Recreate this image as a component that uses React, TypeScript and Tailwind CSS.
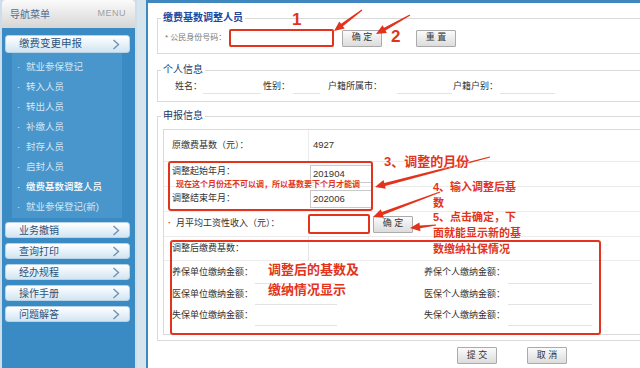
import React from 'react';

const subItems = ['就业参保登记', '转入人员', '转出人员', '补缴人员', '封存人员', '启封人员', '缴费基数调整人员', '就业参保登记(新)'];
const menus = ['业务撤销', '查询打印', '经办规程', '操作手册', '问题解答'];

const Chevron = () => (
  <svg width="8" height="11" viewBox="0 0 8 11" fill="none">
    <polyline points="1.5,1 6.5,5.5 1.5,10" stroke="#6f93b5" strokeWidth="1.4" />
  </svg>
);

const MenuButton = ({ label, tall }: { label: string; tall?: boolean }) => (
  <div
    className={`ml-[3px] mr-[5px] flex items-center justify-between rounded-[3px] border border-[#b7d3e8] bg-linear-to-b from-white to-[#d2e5f2] pl-[13px] pr-[9px] text-[#2e5279] ${
      tall ? 'h-[18px] text-[10.5px]' : 'h-[16px] text-[10px]'
    }`}
  >
    <span>{label}</span>
    <Chevron />
  </div>
);

const Btn = ({ label, className = '' }: { label: string; className?: string }) => (
  <div
    className={`flex h-[17px] w-[40px] items-center justify-center rounded-[1px] border border-[#ababab] bg-linear-to-b from-[#fbfbfb] to-[#dcdcdc] text-[9px] text-[#333] ${className}`}
  >
    {label}
  </div>
);

function arrow(x1: number, y1: number, x2: number, y2: number, w = 3, hw = 9, hl = 10) {
  const dx = x2 - x1;
  const dy = y2 - y1;
  const len = Math.hypot(dx, dy);
  const ux = dx / len;
  const uy = dy / len;
  const px = -uy;
  const py = ux;
  const bx = x2 - ux * hl;
  const by = y2 - uy * hl;
  const p = (x: number, y: number) => `${x.toFixed(1)},${y.toFixed(1)}`;
  return [
    p(x1 + px * 0.6, y1 + py * 0.6),
    p(bx + (px * w) / 2, by + (py * w) / 2),
    p(bx + (px * hw) / 2, by + (py * hw) / 2),
    p(x2, y2),
    p(bx - (px * hw) / 2, by - (py * hw) / 2),
    p(bx - (px * w) / 2, by - (py * w) / 2),
    p(x1 - px * 0.6, y1 - py * 0.6),
  ].join(' ');
}

const arrows = [
  [362, 10, 334, 31],
  [410, 15, 376, 34],
  [490, 157, 375, 187],
  [440, 192, 373, 217],
  [436, 225, 410, 228],
];

const halo = '[text-shadow:0_0_2px_#fff,0_0_2px_#fff,0_0_1px_#fff]';

export default function App() {
  return (
    <div className="relative flex h-[368px] w-[640px] overflow-hidden bg-[#d6e4ee] font-['Liberation_Sans','Noto_Sans_CJK_SC',sans-serif]">
      {/* sidebar */}
      <aside className="flex w-[137px] shrink-0 flex-col bg-[#cddde9] px-[2px]">
        <div className="flex h-[28px] items-center justify-between rounded-t-[4px] bg-linear-to-b from-[#fbfbfb] to-[#d6d6d6] pl-[8px] pr-[9px]">
          <span className="text-[10px] text-[#4d7198]">导航菜单</span>
          <span className="text-[9px] tracking-[0.5px] text-[#a0a0a0]">MENU</span>
        </div>
        <div className="flex-1 bg-[#3a8bc3] pt-[7px]">
          <MenuButton label="缴费变更申报" tall />
          <div className="ml-[10px] mr-[13px] bg-[#4896cb] pb-[1px] pt-[4px]">
            {subItems.map((s, i) => (
              <div
                key={s}
                className={`flex h-[20px] items-center pl-[5px] text-[9.5px] ${
                  i === 6 ? 'font-medium text-white' : 'text-[#d3e7f5]'
                }`}
              >
                <span className="w-[9px]">·</span>
                {s}
              </div>
            ))}
          </div>
          <div className="mt-[4px] flex flex-col gap-[5px]">
            {menus.map((m) => (
              <MenuButton key={m} label={m} />
            ))}
          </div>
        </div>
      </aside>

      {/* main */}
      <main className="ml-[9px] flex-1 overflow-hidden border-l-2 border-t-[3px] border-[#3f88bf] bg-white pl-[9px] text-[#333]">
        <fieldset className="mt-[7px] w-[520px] border border-[#dadada]">
          <legend className="ml-[3px] px-[2px] text-[10px] font-bold leading-[16px] text-[#2048a0]">缴费基数调整人员</legend>
          <div className="pb-[6px] pl-[7px] pt-[3px]">
            <div className="flex h-[18px] items-center">
              <span className="w-[64px] text-[8px] text-[#777]">* 公民身份号码：</span>
              <div className="h-[18px] w-[105px] rounded-[2px] border-2 border-[#e2341d] bg-white" />
              <Btn label="确 定" className="ml-[8px]" />
              <Btn label="重 置" className="ml-[34px]" />
            </div>
          </div>
        </fieldset>

        <fieldset className="mt-[8px] w-[520px] border border-[#dadada]">
          <legend className="ml-[3px] px-[2px] text-[10px] leading-[16px] text-[#253766]">个人信息</legend>
          <div className="pb-[6px] pl-[17px] pt-[1px]">
            <div className="flex h-[16px] items-center text-[9px]">
              <span className="w-[28px]">姓名：</span>
              <span className="h-[14px] w-[58px] border-b border-[#e3e3e3]" />
              <span className="ml-[2px] w-[30px]">性别：</span>
              <span className="h-[14px] w-[27px] border-b border-[#e3e3e3]" />
              <span className="ml-[8px] w-[69px]">户籍所属市：</span>
              <span className="h-[14px] w-[55px] border-b border-[#e3e3e3]" />
              <span className="ml-[1px] w-[47px]">户籍户别：</span>
              <span className="h-[14px] w-[55px] border-b border-[#e3e3e3]" />
            </div>
          </div>
        </fieldset>

        <fieldset className="mt-[6px] w-[520px] border border-[#dadada]">
          <legend className="ml-[3px] px-[2px] text-[10px] leading-[16px] text-[#253766]">申报信息</legend>
          <div className="pb-[5px] pl-[5px] pt-[5px]">
            <div className="border border-[#dadada] pb-[8px] text-[9px]">
              <div className="flex h-[32px] items-center border-b border-[#ececec]">
                <span className="w-[144px] pl-[8px]">原缴费基数（元）：</span>
                <span className="flex h-full items-center border-l border-[#ececec] pl-[4px] text-[9.5px]">4927</span>
              </div>
              <div className="flex h-[25px] items-center border-b border-[#ececec]">
                <span className="w-[144px] pb-[5px] pl-[8px]">调整起始年月：</span>
                <span className="ml-[2px] flex h-[18px] w-[62px] items-center border border-[#c9c9c9] pl-[2px] text-[9.5px]">201904</span>
              </div>
              <div className="flex h-[25px] items-center border-b border-[#ececec]">
                <span className="w-[144px] pl-[8px]">调整结束年月：</span>
                <span className="ml-[2px] flex h-[18px] w-[62px] items-center border border-[#c9c9c9] pl-[2px] text-[9.5px]">202006</span>
              </div>
              <div className="flex h-[25px] items-center border-b border-[#ececec]">
                <span className="flex w-[144px] pl-[4px]">
                  <span className="w-[8px] font-bold text-[#e2341d]">·</span>月平均工资性收入（元）：
                </span>
                <span className="h-[20px] w-[62px] rounded-[2px] border-2 border-[#e2341d] bg-white" />
                <Btn label="确 定" className="ml-[3px] h-[16px] w-[37px]" />
              </div>
              <div className="flex h-[24px] items-center border-b border-[#ececec]">
                <span className="w-[144px] pl-[8px]">调整后缴费基数：</span>
                <span className="h-full border-l border-[#e6e6e6]" />
              </div>
              {[
                ['养保单位缴纳金额：', '养保个人缴纳金额：', 'h-[23px]'],
                ['医保单位缴纳金额：', '医保个人缴纳金额：', 'h-[21px]'],
                ['失保单位缴纳金额：', '失保个人缴纳金额：', 'h-[21px]'],
              ].map(([a, b, h]) => (
                <div key={a} className={`flex items-center ${h}`}>
                  <span className="w-[91px] pl-[8px]">{a}</span>
                  <span className="h-full w-[82px] border-b border-[#e3e3e3]" />
                  <span className="w-[171px] pr-[3px] text-right">{b}</span>
                  <span className="h-full w-[84px] border-b border-[#e3e3e3]" />
                </div>
              ))}
            </div>
          </div>
        </fieldset>

        <div className="mt-[6px] flex gap-[30px] pl-[300px]">
          <Btn label="提 交" />
          <Btn label="取 消" />
        </div>
      </main>

      {/* annotations */}
      <div className="pointer-events-none absolute inset-0">
        <div className="absolute left-[168px] top-[161px] h-[50px] w-[205px] rounded-[3px] border-2 border-[#e2341d]" />
        <div className="absolute left-[170px] top-[240px] h-[95px] w-[431px] rounded-[3px] border-2 border-[#e2341d]" />
        <svg className="absolute left-0 top-0" width="640" height="368">
          {arrows.map(([a, b, c, d], i) => (
            <polygon key={i} points={arrow(a, b, c, d)} fill="#e2341d" />
          ))}
        </svg>
        <span className="absolute left-[292px] top-[7px] text-[17px] font-bold text-[#e2341d]">1</span>
        <span className="absolute left-[391px] top-[24px] text-[17px] font-bold text-[#e2341d]">2</span>
        <span className={`absolute left-[176px] top-[179px] text-[8px] font-bold leading-[12px] text-[#e2341d] ${halo}`}>
          现在这个月份还不可以调，所以基数要下个月才能调
        </span>
        <span className={`absolute left-[384px] top-[153px] text-[13px] font-bold leading-[18px] text-[#e2341d] ${halo}`}>
          3、调整的月份
        </span>
        <div className={`absolute left-[433px] top-[179px] text-[11px] font-bold leading-[16px] text-[#e2341d] ${halo}`}>
          <div>4、输入调整后基</div>
          <div>数</div>
        </div>
        <div className={`absolute left-[433px] top-[209px] text-[11px] font-bold leading-[16px] text-[#e2341d] ${halo}`}>
          <div>5、点击确定，下</div>
          <div>面就能显示新的基</div>
          <div>数缴纳社保情况</div>
        </div>
        <div className={`absolute left-[268px] top-[260px] text-[13px] font-bold leading-[20px] text-[#e2341d] ${halo}`}>
          <div>调整后的基数及</div>
          <div>缴纳情况显示</div>
        </div>
      </div>
    </div>
  );
}
